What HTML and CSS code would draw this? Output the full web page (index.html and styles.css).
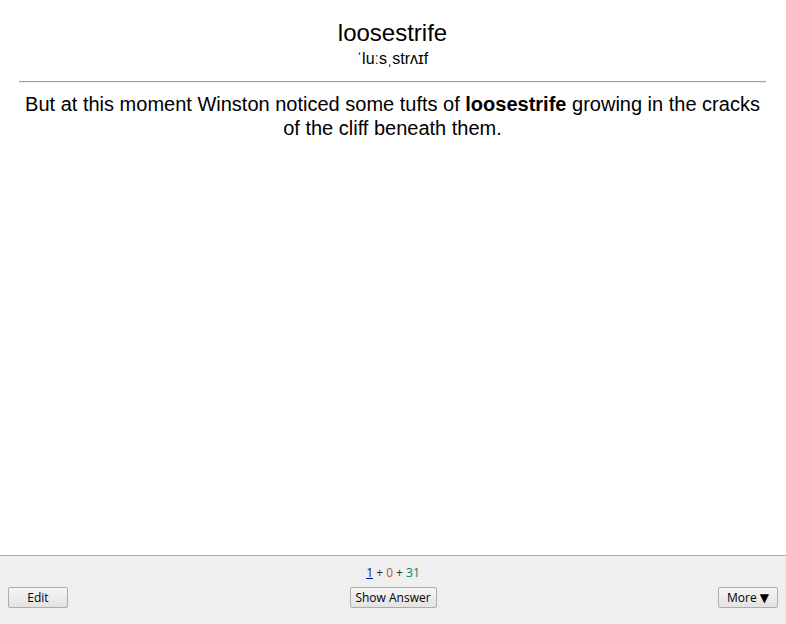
FILE: index.html
```html
<!DOCTYPE html>
<html>
<head>
<meta charset="utf-8">
<link rel="stylesheet" href="styles.css">
</head>
<body>
<div class="app">
  <main class="card">
    <div class="word">loosestrife</div>
    <div class="ipa">ˈluːsˌstrʌɪf</div>
    <hr class="rule">
    <div class="sentence">But at this moment Winston noticed some tufts of <b>loosestrife</b> growing in the cracks of the cliff beneath them.</div>
  </main>
  <footer class="bar">
    <div class="counts"><span class="new">1</span> + <span class="learn">0</span> + <span class="review">31</span></div>
    <div class="buttons">
      <button class="btn edit">Edit</button>
      <button class="btn show">Show Answer</button>
      <button class="btn more">More ▼</button>
    </div>
  </footer>
</div>
</body>
</html>
```

FILE: styles.css
```css
html, body {
  margin: 0;
  padding: 0;
  height: 100%;
}
.app {
  display: flex;
  flex-direction: column;
  height: 624px;
}
.card {
  flex: 1;
  background: #fff;
  padding: 19px 20px 0 19px;
  font-family: "Liberation Sans", Arial, sans-serif;
  color: #000;
  text-align: center;
}
.word {
  font-size: 24px;
  line-height: 28px;
}
.ipa {
  font-size: 16px;
  line-height: 18px;
  margin-top: 3px;
}
.rule {
  border: none;
  border-top: 1px solid #a0a0a0;
  border-bottom: 1px solid #eee;
  margin: 13px 0 0 0;
  height: 0;
}
.sentence {
  font-size: 20px;
  line-height: 24px;
  margin-top: 9px;
}
.bar {
  height: 68px;
  background: #efefef;
  border-top: 1px solid #ababab;
  font-family: "Open Sans", "DejaVu Sans", sans-serif;
  font-size: 12px;
  display: flex;
  flex-direction: column;
}
.counts {
  text-align: center;
  margin-top: 9px;
  line-height: 16px;
  font-size: 12px;
  color: #333;
}
.new { color: #0000aa; text-decoration: underline; }
.learn { color: #c35617; }
.review { color: #00875a; }
.buttons {
  display: flex;
  justify-content: space-between;
  align-items: center;
  padding: 0 8px;
  margin-top: 6px;
}
.btn {
  height: 21px;
  font-family: "Open Sans", "DejaVu Sans", sans-serif;
  font-size: 12px;
  color: #000;
  background: linear-gradient(#f6f6f6, #e2e2e2);
  border: 1px solid #adadad;
  border-radius: 2px;
  padding: 0 6px;
  line-height: 18px;
}
.edit { width: 60px; }
.show { width: 87px; padding: 0 4px; }
.more { width: 60px; }
```
